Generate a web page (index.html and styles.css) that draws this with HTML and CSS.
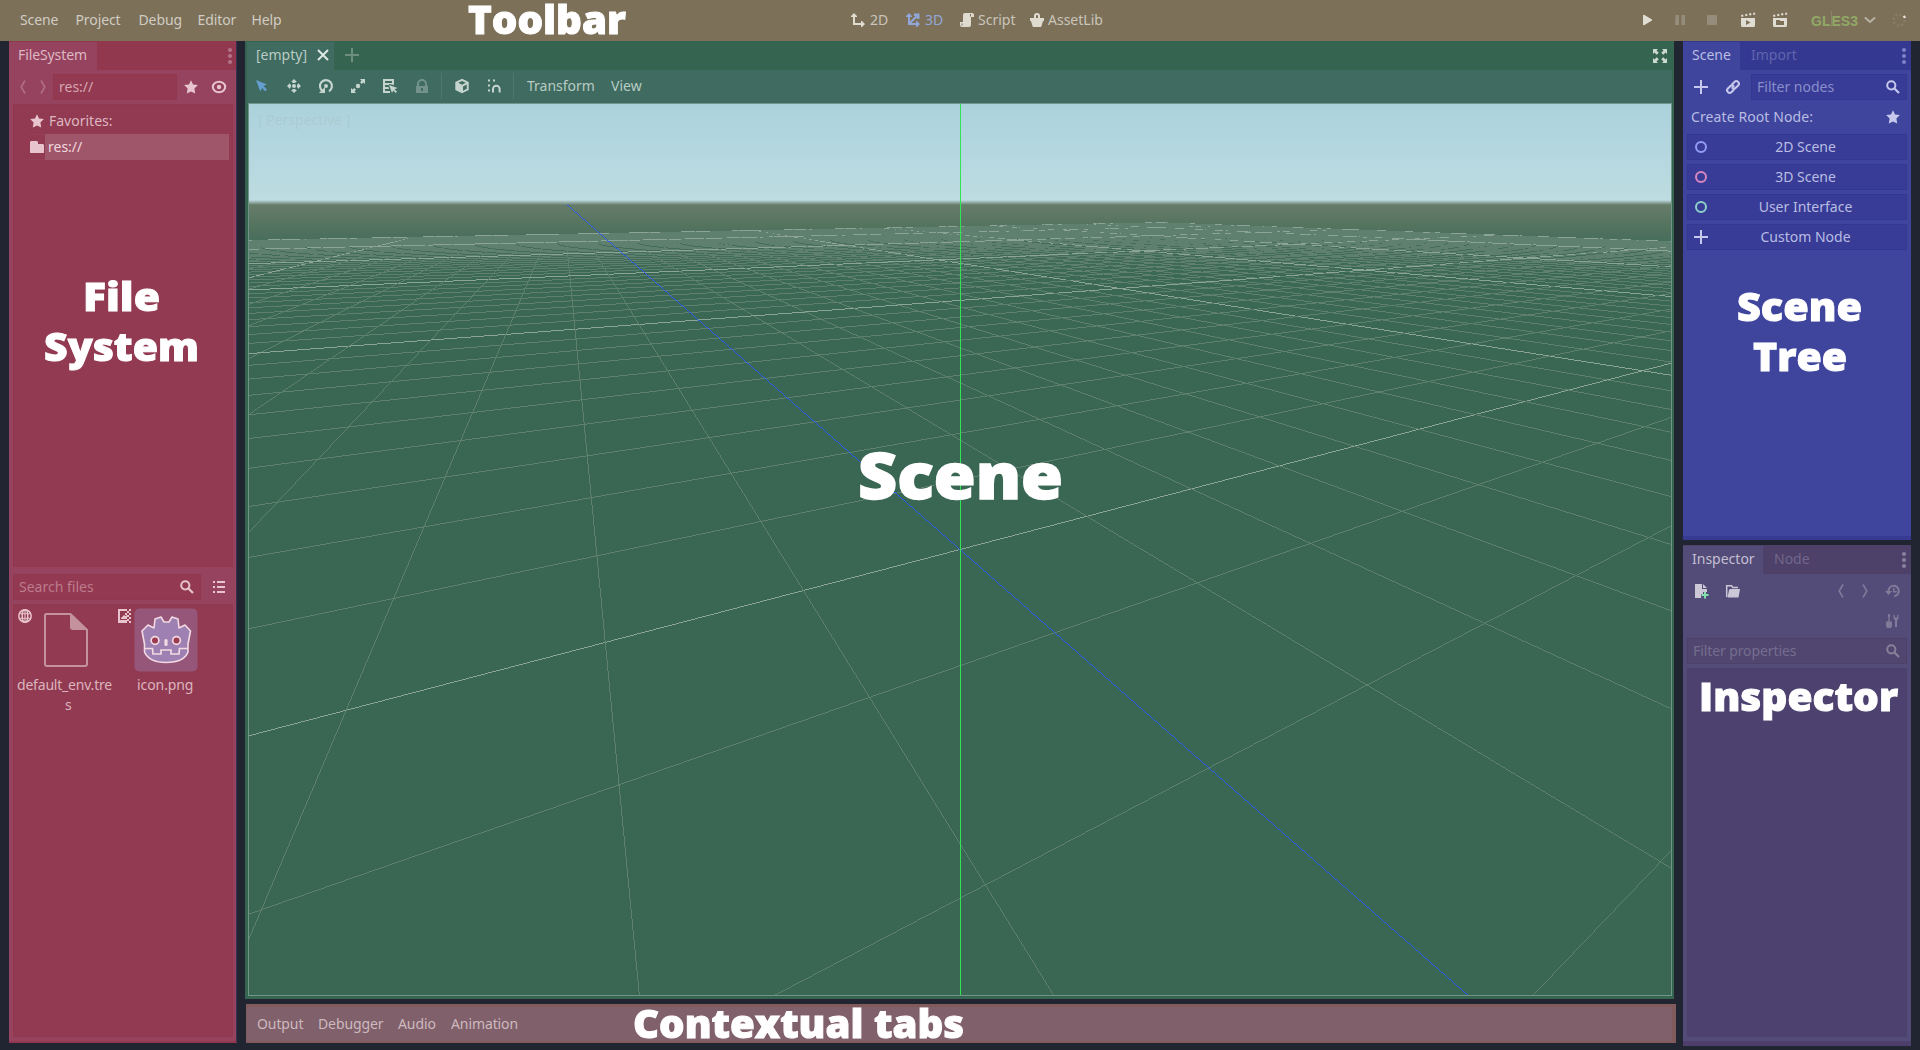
FILE: index.html
```html
<!DOCTYPE html>
<html lang="en">
<head>
<meta charset="utf-8">
<title>Editor</title>
<link rel="stylesheet" href="styles.css">
</head>
<body>
<svg class="defs" width="0" height="0" aria-hidden="true">
  <symbol id="i-2d" viewBox="0 0 16 16"><path d="M4 1 1 4v1h2v8h8v2h1l3-3-3-3h-1v2H5V5h2V4z"/></symbol>
  <symbol id="i-3d" viewBox="0 0 16 16"><path d="M4 1 1 4v1h2v8h8v2h1l3-3-3-3h-1v2H6.500L12 5.600V7h2.500V1.500H9V4h1.400L5 9.400V5h2V4z"/></symbol>
  <symbol id="i-script" viewBox="0 0 16 16"><path d="M6 1a2 2 0 0 0-2 2v7H1v3a2 2 0 0 0 2 2h7a2 2 0 0 0 2-2V5h3V3a2 2 0 0 0-2-2z"/><path d="M3 13.500V11.500M11.500 2v2.500" stroke="#7c7059" fill="none"/></symbol>
  <symbol id="i-basket" viewBox="0 0 16 16"><path d="M8 1a3 3 0 0 0-3 3v2H1v3h1l1.500 5 .5 1h8l.5-1L14 9h1V6h-4V4a3 3 0 0 0-3-3zm0 2a1 1 0 0 1 1 1v2H7V4a1 1 0 0 1 1-1z"/></symbol>
  <symbol id="i-play" viewBox="0 0 16 16"><path d="M4 3v10l1 .2L13 8.500v-1L5 2.800z"/></symbol>
  <symbol id="i-pause" viewBox="0 0 16 16"><path d="M3.500 3h3.500v10H3zM9.500 3H13v10H9.500z"/></symbol>
  <symbol id="i-stop" viewBox="0 0 16 16"><rect x="3" y="3" width="10" height="10" rx="1"/></symbol>
  <symbol id="i-clap-play" viewBox="0 0 16 16"><path fill-rule="evenodd" d="M1 6h14v8l-1 1H2l-1-1zM6 8v5l4.500-2.500z"/><path d="m1 3 2-.5.5 2-2 .5zM5 2.200l2-.4.5 2-2 .4zM9 1.500l2-.4.5 2-2 .4zM13 .900l2-.3.3 2-1.800.3z"/></symbol>
  <symbol id="i-clap-open" viewBox="0 0 16 16"><path fill-rule="evenodd" d="M1 6h14v8l-1 1H2l-1-1zM4 8v5h8V9H8.500L7.500 8z"/><path d="m1 3 2-.5.5 2-2 .5zM5 2.200l2-.4.5 2-2 .4zM9 1.500l2-.4.5 2-2 .4zM13 .900l2-.3.3 2-1.800.3z"/></symbol>
  <symbol id="i-down" viewBox="0 0 16 16"><path d="m3.500 6 4.500 4 4.500-4" fill="none" stroke="currentColor" stroke-width="2" stroke-linecap="round"/></symbol>
  <symbol id="i-spin" viewBox="0 0 16 16"><circle cx="8" cy="8" r="5.500" fill="none" stroke="#8b7e68" stroke-width="2.500" stroke-dasharray="1.900 2.420"/><path d="m11.500 5 2-1.800 1.500 2-.8 1z" fill="#eeeae0"/></symbol>
  <symbol id="i-dots" viewBox="0 0 6 18"><circle cx="3" cy="3" r="2"/><circle cx="3" cy="9" r="2"/><circle cx="3" cy="15" r="2"/></symbol>
  <symbol id="i-back" viewBox="0 0 8 16"><path d="M6 1.500 2.200 8 6 14.500" fill="none" stroke="currentColor" stroke-width="1.600"/></symbol>
  <symbol id="i-fwd" viewBox="0 0 8 16"><path d="M2 1.500 5.800 8 2 14.500" fill="none" stroke="currentColor" stroke-width="1.600"/></symbol>
  <symbol id="i-star" viewBox="0 0 16 16"><path d="m8 1.200 2 4.300 4.900.6-3.500 3.400.8 5L8 12.400l-4.200 2.100.8-5L1.100 6.100 6 5.500z"/></symbol>
  <symbol id="i-eye" viewBox="0 0 16 16"><ellipse cx="8" cy="8" rx="6.200" ry="5.300" fill="none" stroke="currentColor" stroke-width="2"/><circle cx="8" cy="8" r="2.200"/></symbol>
  <symbol id="i-folder" viewBox="0 0 16 16"><path d="M2 2 1 3v10.500l.5.500h13l.5-.5V6l-1-1H9V3L8 2z"/></symbol>
  <symbol id="i-mag" viewBox="0 0 16 16"><circle cx="6.300" cy="6.300" r="4.100" fill="none" stroke="currentColor" stroke-width="2"/><path d="m9.500 9.500 4.500 4.500" stroke="currentColor" stroke-width="2.200"/></symbol>
  <symbol id="i-list" viewBox="0 0 16 16"><path d="M2 2h2v2H2zM6 2h8v2H6zM2 7h2v2H2zM6 7h8v2H6zM2 12h2v2H2zM6 12h8v2H6z"/></symbol>
  <symbol id="i-globe" viewBox="0 0 16 16"><g fill="none" stroke="currentColor" stroke-width="1.500"><circle cx="8" cy="8" r="6.200"/><ellipse cx="8" cy="8" rx="2.800" ry="6.200"/><path d="M2.500 5.800h11M2.500 10.200h11M8 2v12" stroke-width="1.100"/></g></symbol>
  <symbol id="i-image" viewBox="0 0 16 16"><path fill-rule="evenodd" d="M1 1h7v2H3v9h7v3H1zM4 10l3-3 1.500 1.200L10 7v4H4z"/><path d="M8 1h2v2H8zM12 1h2v2h-2zM10 3h2v2h-2zM8 5h2v2H8zM12 5h2v2h-2zM10 7h2v2h-2zM12 9h2v2h-2zM10 11h2v2h-2zM12 13h2v2h-2z"/></symbol>
  <symbol id="i-x" viewBox="0 0 16 16"><path d="m3 3 10 10M13 3 3 13" stroke="currentColor" stroke-width="2"/></symbol>
  <symbol id="i-plus" viewBox="0 0 16 16"><path d="M7 1h2v6h6v2H9v6H7V9H1V7h6z"/></symbol>
  <symbol id="i-expand" viewBox="0 0 16 16"><path d="M1 1h5L4.500 2.500l2.200 2.200-2 2-2.200-2.200L1 6zM15 1v5l-1.500-1.500-2.200 2.200-2-2 2.200-2.200L10 1zM1 15v-5l1.500 1.500 2.200-2.200 2 2-2.200 2.200L6 15zM15 15h-5l1.500-1.500-2.200-2.200 2-2 2.200 2.200L15 10z"/></symbol>
  <symbol id="i-cursor" viewBox="0 0 16 16"><path d="m2 2 11 4.500L9.500 8l3.500 3.500-1.800 1.800L8 10l-1.700 3.500z"/></symbol>
  <symbol id="i-move" viewBox="0 0 16 16"><circle cx="8" cy="8" r="2"/><path d="M8 1 5 4h1.500v1h3V4H11zM8 15l3-3H9.500v-1h-3v1H5zM1 8l3 3V9.500h1v-3H4V5zM15 8l-3-3v1.500h-1v3h1V11z"/></symbol>
  <symbol id="i-rotate" viewBox="0 0 16 16"><path d="M4.600 13A6 6 0 1 1 11 13.200" fill="none" stroke="currentColor" stroke-width="2.200"/><circle cx="8" cy="8" r="2"/><path d="M1 15h6V9z"/></symbol>
  <symbol id="i-scale" viewBox="0 0 16 16"><circle cx="8" cy="8" r="2.200"/><path d="M10 1h5v5l-1.700-1.500-1.500 1.500-1.800-1.800 1.500-1.500zM6 15H1v-5l1.700 1.500 1.500-1.500 1.800 1.800-1.500 1.500z"/></symbol>
  <symbol id="i-select" viewBox="0 0 16 16"><path fill-rule="evenodd" d="M1 1h11v6L7 6v1H3v2h3.500l.5 2H3v2h5v2H1zM3 3v2h7V3z"/><path d="m7 7 8.500 3-3 1.200 2.500 2.500-1.300 1.300-2.500-2.500L10 15z"/></symbol>
  <symbol id="i-lock" viewBox="0 0 16 16"><path fill-rule="evenodd" d="M8 1a5 5 0 0 0-5 5v2H2v7h12V8h-1V6a5 5 0 0 0-5-5zm0 2a3 3 0 0 1 3 3v2H5V6a3 3 0 0 1 3-3zM7 10h2v3H7z"/></symbol>
  <symbol id="i-cube" viewBox="0 0 16 16"><path fill-rule="evenodd" d="M8 .700 1.300 4v8L8 15.300 14.700 12V4zM8 2.900 11.800 4.800 8 6.700 4.200 4.800zM9 8.400l3.800-1.900v4.300L9 12.700z"/></symbol>
  <symbol id="i-snap" viewBox="0 0 16 16"><path d="M2 1.500h2v2H2zM7 1.500h2v2H7zM2 6.500h2v2H2zM2 11.500h2v2H2z"/><path d="M7 14.500V11a3.300 3.300 0 0 1 6.600 0v3.500" fill="none" stroke="currentColor" stroke-width="2"/></symbol>
  <symbol id="i-link" viewBox="0 0 16 16"><g fill="none" stroke="currentColor" stroke-width="2.100" stroke-linecap="round"><path d="M7.200 5.200 9.500 2.900a2.500 2.500 0 0 1 3.600 3.600L10.800 8.800a2.500 2.500 0 0 1-3.400.1"/><path d="M8.800 10.800 6.500 13.100a2.500 2.500 0 0 1-3.600-3.600L5.200 7.200a2.500 2.500 0 0 1 3.400-.1"/></g></symbol>
  <symbol id="i-ring" viewBox="0 0 16 16"><circle cx="8" cy="8" r="5" fill="none" stroke="currentColor" stroke-width="2"/></symbol>
  <symbol id="i-new" viewBox="0 0 16 16"><path d="M2 1h7v5h5v3h-4v2H8v3l.5 1H2zM10 1l4 4h-4z"/><path d="M11 9h2v2h2.500v2H13v2.500h-2V13H8.500v-2H11z" fill="#84e0aa"/></symbol>
  <symbol id="i-open" viewBox="0 0 16 16"><path d="M1.700 14V2.700h4.800L8 4.500h5" fill="none" stroke="currentColor" stroke-width="1.500"/><path d="M5 6h10l-1.500 8.500H2.500L4 7z"/></symbol>
  <symbol id="i-history" viewBox="0 0 16 16"><path d="M3.500 9A5.200 5.200 0 1 1 9 13.200" fill="none" stroke="currentColor" stroke-width="2"/><path d="M0 8h7l-3.500 4z"/><path d="M8.800 5v3.700h3" fill="none" stroke="currentColor" stroke-width="1.500"/></symbol>
  <symbol id="i-tools" viewBox="0 0 16 16"><path d="M3.200 1h1.600l.4 2-.5 1v4.500H7V13l-1 2H2l-1-2V8.500h2.300V4l-.5-1zM8.500 1.500 9.800 2v2.500h2.400V2l1.300-.5V5.500L12 7.500V14h-2V7.500L8.500 5.500z"/></symbol>
</svg>

<header class="menubar">
  <nav class="menus"><span class="m1">Scene</span><span class="m2">Project</span><span class="m3">Debug</span><span class="m4">Editor</span><span>Help</span></nav>
  <div class="modes">
    <span class="mode w56"><svg class="icon"><use href="#i-2d"/></svg>2D</span>
    <span class="mode w54 active"><svg class="icon"><use href="#i-3d"/></svg>3D</span>
    <span class="mode w70"><svg class="icon"><use href="#i-script"/></svg>Script</span>
    <span class="mode"><svg class="icon"><use href="#i-basket"/></svg>AssetLib</span>
  </div>
  <div class="run">
    <svg class="icon"><use href="#i-play"/></svg>
    <svg class="icon dim first"><use href="#i-pause"/></svg>
    <svg class="icon dim"><use href="#i-stop"/></svg>
    <svg class="icon clap"><use href="#i-clap-play"/></svg>
    <svg class="icon"><use href="#i-clap-open"/></svg>
    <span class="driver">GL<i></i>ES3</span>
    <svg class="icon chev"><use href="#i-down"/></svg>
    <svg class="icon spin"><use href="#i-spin"/></svg>
  </div>
</header>

<main class="workspace">
  <aside class="dock files">
    <div class="tabs"><span class="tab">FileSystem</span><svg class="dots"><use href="#i-dots"/></svg></div>
    <div class="pathrow">
      <svg class="nav"><use href="#i-back"/></svg><svg class="nav"><use href="#i-fwd"/></svg>
      <div class="field path">res://</div>
      <svg class="icon"><use href="#i-star"/></svg><svg class="icon"><use href="#i-eye"/></svg>
    </div>
    <div class="box tree">
      <div class="treerow"><svg class="icon"><use href="#i-star"/></svg><span class="treename">Favorites:</span></div>
      <div class="treerow line"><svg class="icon"><use href="#i-folder"/></svg><span class="treename selected">res://</span></div>
    </div>
    <div class="searchrow">
      <div class="field"><span>Search files</span><svg class="icon"><use href="#i-mag"/></svg></div>
      <svg class="icon"><use href="#i-list"/></svg>
    </div>
    <div class="box filelist">
      <div class="file first">
        <svg class="icon badge"><use href="#i-globe"/></svg>
        <svg class="thumb" viewBox="0 0 64 64"><path d="M12.500 6h25L54 22v34a2 2 0 0 1-2 2H14a2 2 0 0 1-2-2V7a2 2 0 0 1 1-1z" fill="none" stroke="#c4919f" stroke-width="2"/><path d="M37 5v14a3 3 0 0 0 3 3h15z" fill="#c4919f"/></svg>
        <span class="fname">default_env.tre<br><em>s</em></span>
      </div>
      <div class="file second">
        <svg class="icon badge"><use href="#i-image"/></svg>
        <svg class="thumb" viewBox="0 0 64 64">
          <rect x=".5" y=".5" width="63" height="63" rx="5" fill="#95567a"/>
          <path d="M10.500 36 8 23l6-6 6 3 1-9 6-2 3 5h5l3-5 6 2 1 9 6-3 5.500 6L54 36v8c-3 8-13 10.500-22 10.500S14 52 10.500 44z" fill="#9e80b2" stroke="#f2d9e2" stroke-width="1.600" stroke-linejoin="round"/>
          <path d="M10.500 40.500h8l.5 5.500h8v-4h10v4h8l.5-5.500h8.500" fill="none" stroke="#f2d9e2" stroke-width="1.700"/>
          <circle cx="21" cy="32.500" r="4.700" fill="#f2d9e2"/><circle cx="21" cy="32.500" r="3" fill="#9c3c52"/>
          <circle cx="42.500" cy="32.500" r="4.700" fill="#f2d9e2"/><circle cx="42.500" cy="32.500" r="3" fill="#9c3c52"/>
          <rect x="30.400" y="31" width="3.200" height="7" rx="1.500" fill="#f2d9e2"/>
        </svg>
        <span class="fname">icon.png</span>
      </div>
    </div>
  </aside>

  <section class="center">
    <div class="stage">
      <div class="tabs scenetabs">
        <span class="tab open">[empty]<svg class="icon"><use href="#i-x"/></svg></span>
        <svg class="icon add"><use href="#i-plus"/></svg>
        <svg class="icon full"><use href="#i-expand"/></svg>
      </div>
      <div class="tools">
        <svg class="icon sel"><use href="#i-cursor"/></svg><svg class="icon"><use href="#i-move"/></svg><svg class="icon"><use href="#i-rotate"/></svg><svg class="icon"><use href="#i-scale"/></svg><svg class="icon"><use href="#i-select"/></svg><svg class="icon dim"><use href="#i-lock"/></svg>
        <i class="sep"></i>
        <svg class="icon"><use href="#i-cube"/></svg><svg class="icon"><use href="#i-snap"/></svg>
        <i class="sep"></i>
        <span class="transform">Transform</span><span>View</span>
      </div>
      <div class="viewport">
        <canvas id="grid" width="1422" height="891"></canvas>
        <span class="persp">[ Perspective ]</span>
      </div>
    </div>
    <footer class="bottom"><span class="b1">Output</span><span class="b2">Debugger</span><span class="b3">Audio</span><span>Animation</span></footer>
  </section>

  <aside class="right">
    <div class="dock scene">
      <div class="tabs"><span class="tab">Scene</span><span class="tab off">Import</span><svg class="dots"><use href="#i-dots"/></svg></div>
      <div class="noderow">
        <svg class="icon"><use href="#i-plus"/></svg><svg class="icon"><use href="#i-link"/></svg>
        <div class="field"><span>Filter nodes</span><svg class="icon"><use href="#i-mag"/></svg></div>
      </div>
      <div class="rootrow"><span>Create Root Node:</span><svg class="icon"><use href="#i-star"/></svg></div>
      <div class="nodes">
        <div class="node"><svg class="icon c2d"><use href="#i-ring"/></svg><span>2D Scene</span></div>
        <div class="node"><svg class="icon c3d"><use href="#i-ring"/></svg><span>3D Scene</span></div>
        <div class="node"><svg class="icon cui"><use href="#i-ring"/></svg><span>User Interface</span></div>
        <div class="node"><svg class="icon"><use href="#i-plus"/></svg><span>Custom Node</span></div>
      </div>
    </div>
    <div class="dock inspector">
      <div class="tabs"><span class="tab">Inspector</span><span class="tab off">Node</span><svg class="dots"><use href="#i-dots"/></svg></div>
      <div class="insrow">
        <svg class="icon"><use href="#i-new"/></svg><svg class="icon"><use href="#i-open"/></svg>
        <svg class="nav push"><use href="#i-back"/></svg><svg class="nav"><use href="#i-fwd"/></svg><svg class="icon faint"><use href="#i-history"/></svg>
      </div>
      <div class="insrow two"><svg class="icon push faint"><use href="#i-tools"/></svg></div>
      <div class="field"><span>Filter properties</span><svg class="icon"><use href="#i-mag"/></svg></div>
      <div class="box props"></div>
    </div>
  </aside>
</main>

<svg class="labels" width="1920" height="1050" viewBox="0 0 1920 1050" font-size="39.500">
  <text x="468" y="34" textLength="158" lengthAdjust="spacingAndGlyphs">Toolbar</text>
  <text x="83" y="311" textLength="77" lengthAdjust="spacingAndGlyphs">File</text>
  <text x="44" y="361" textLength="155" lengthAdjust="spacingAndGlyphs">System</text>
  <text x="858" y="499" textLength="205" lengthAdjust="spacingAndGlyphs" class="big">Scene</text>
  <text x="1737" y="321" textLength="125" lengthAdjust="spacingAndGlyphs">Scene</text>
  <text x="1753" y="371" textLength="94" lengthAdjust="spacingAndGlyphs">Tree</text>
  <text x="1699" y="711" textLength="199" lengthAdjust="spacingAndGlyphs">Inspector</text>
  <text x="633" y="1038" textLength="331" lengthAdjust="spacingAndGlyphs">Contextual tabs</text>
</svg>
<script src="grid.js"></script>
</body>
</html>
```
FILE: styles.css
```css
* { box-sizing: border-box; }
body { margin: 0; width: 1920px; height: 1050px; overflow: hidden; display: flex; flex-direction: column; background: #202531; font: 14px/20px "Noto Sans", sans-serif; color: #d0ccc2; }
.defs { position: absolute; }
svg { display: block; flex: none; fill: currentColor; }
.icon { width: 16px; height: 16px; }
.nav { width: 8px; height: 16px; }
.dots { width: 6px; height: 18px; }

.menubar { height: 41px; flex: none; display: flex; align-items: center; background: #7c7059; padding-bottom: 1px; }
.menus { display: flex; width: 850px; padding-left: 20px; letter-spacing: -.1px; }
.m1 { width: 55.500px; } .m2 { width: 63px; } .m3 { width: 59px; } .m4 { width: 54px; }
.modes { display: flex; width: 789px; color: #c9c5b9; }
.mode { display: flex; align-items: center; gap: 4px; }
.mode .icon { color: #dfdbcf; }
.mode.active, .mode.active .icon { color: #91a6d6; }
.w56 { width: 55px; } .w54 { width: 54px; } .w70 { width: 70px; }
.mode:last-child, .w70 { gap: 3px; }
.run { display: flex; align-items: center; gap: 16px; color: #e0ddd4; }
.run .dim { color: #968c7b; }
.run .first { margin-left: 1px; }
.run .clap { margin-left: 4px; }
.driver { font: bold 14px/20px "Liberation Sans", sans-serif; color: #91a866; margin-left: 7px; width: 47px; display: flex; margin-right: -12px; padding-top: 2px; }
.driver i { width: 1px; height: 16px; background: #8b8465; margin-left: 1px; }
.chev { color: #b8b2a6; }
.spin { margin-left: -3px; }

.workspace { flex: 1; display: flex; min-height: 0; }
.dock { display: flex; flex-direction: column; background: var(--panel); }
.tabs { height: 29px; flex: none; display: flex; align-items: center; background: var(--bar); }
.tab { height: 29px; display: flex; align-items: center; padding: 0 0 2px 9px; background: var(--panel); border-top: 1px solid var(--bar); }
.tab.off { background: none; color: var(--off); padding-left: 11px; }
.tabs .dots { margin-left: auto; margin-right: 4px; color: var(--mark); }
.field { height: 26px; background: var(--field); border: 1px solid var(--bar); display: flex; align-items: center; justify-content: space-between; padding: 0 5px; color: var(--hint); }
.field .icon { color: var(--ink); }
.box { background: var(--box); border: 1px solid var(--bar); }

.files { width: 228px; height: 1002px; margin-left: 9px; --panel: #96435f; --bar: #91374e; --field: #933951; --box: #913a51; --ink: #e8c5ce; --mark: #b5738a; --hint: #bd7c8e; color: #ddb8c2; border-right: 1px solid #3a2f55; border-bottom: 2px solid #953651; }
.files .tab { width: 88px; letter-spacing: -.1px; }
.files .tabs .dots { margin-right: 3px; }
.pathrow { display: flex; align-items: center; padding: 4px 9px 4px 10px; gap: 12px; color: var(--ink); }
.pathrow .nav { color: #b06f84; }
.pathrow .field { width: 124px; margin-left: -6px; color: #d5a6b3; margin-right: -6px; }
.tree { margin: 0 3px 0 4px; height: 463px; padding: 3px 3px 0 15px; }
.treerow { display: flex; align-items: center; height: 26px; color: var(--ink); }
.treerow.line { border-top: 1px solid #973f57; border-bottom: 1px solid #973f57; }
.treename { flex: 1; padding-left: 4px; color: #ddb8c2; }
.treename.selected { background: #9f566b; height: 26px; line-height: 26px; padding-left: 3px; color: #f0d8de; }
.searchrow { display: flex; align-items: center; gap: 10px; padding: 7px 9px 4px 4px; color: var(--ink); }
.searchrow .field { width: 188px; }
.filelist { margin: 0 3px 4px 4px; flex: 1; display: flex; padding: 3px 0 0 2px; }
.file { position: relative; }
.file.first { width: 100px; padding-left: 17px; }
.file.second { width: 118px; padding-left: 19px; }
.badge { position: absolute; left: 1px; top: 0; color: var(--ink); }
.second .badge { left: 2px; }
.thumb { width: 64px; height: 64px; }
.fname { display: block; margin-top: 3px; margin-left: -16px; color: #dcb5bf; white-space: nowrap; letter-spacing: -.2px; }
.second .fname { margin-left: 3px; letter-spacing: -.1px; }
.fname em { font-style: normal; padding-left: 48px; }

.center { width: 1431px; margin-left: 8px; display: flex; flex-direction: column; }
.stage { --panel: #3f6b60; --bar: #356550; width: 1429px; height: 958px; flex: none; background: #356550; padding: 0 2px 3px; color: #b9cbc4; display: flex; flex-direction: column; }
.tab.open { width: 87px; justify-content: space-between; padding-right: 3px; }
.tab.open .icon { color: #dfe8e2; }
.add { color: #6e8f7f; margin-left: 10px; margin-bottom: 1px; }
.full { margin-left: auto; margin-right: 4px; color: #ccd9d1; }
.tools { height: 33px; flex: none; background: var(--panel); display: flex; align-items: center; padding-left: 7px; gap: 16px; padding-bottom: 1px; }
.tools .icon { color: #c5d5ce; }
.tools .icon.sel { color: #659fd2; }
.tools .icon.dim { color: #73928a; }
.sep { width: 1px; height: 26px; background: #4f7970; margin: 0 -4px 0 -5px; }
.transform { width: 68px; margin-left: 1px; }
.viewport { flex: none; position: relative; width: 1424px; height: 893px; margin-left: 1px; border: 1px solid #719588; }
canvas { display: block; width: 1422px; height: 891px; }
.persp { position: absolute; left: 9px; top: 6px; color: #abcbd1; }
.bottom { margin: 5px 0 0 1px; height: 39px; background: #80606a; border: 1px solid #815a5c; border-width: 3px 4px 2px 1px; display: flex; align-items: center; padding: 0 0 1px 10px; color: #cdb9bf; letter-spacing: -.1px; }
.b1 { width: 61px; } .b2 { width: 80px; } .b3 { width: 53px; }

.right { width: 228px; margin-left: 7px; display: flex; flex-direction: column; gap: 5px; }
.scene { height: 499px; flex: none; --panel: #3f459d; --bar: #343890; --field: #383c96; --box: #373b95; --ink: #c6c8ec; --mark: #7f83c6; --off: #6065af; --hint: #8a8dcb; color: #b9bce3; border-bottom: 4px solid #363a92; }
.scene .tab:first-child { width: 57px; }
.noderow { display: flex; align-items: center; padding: 4px 4px 4px 10px; gap: 16px; color: var(--ink); }
.noderow .field { width: 156px; margin-left: -6px; }
.rootrow { display: flex; align-items: center; justify-content: space-between; height: 26px; padding: 0 10px 0 8px; letter-spacing: .1px; }
.rootrow .icon { color: var(--ink); }
.nodes { display: flex; flex-direction: column; gap: 4px; padding: 4px; }
.node { height: 26px; background: var(--field); border: 1px solid var(--bar); display: flex; align-items: center; padding: 0 5px; }
.node .icon { color: var(--ink); }
.node span { flex: 1; text-align: center; padding-left: 1px; }
.node .c2d { color: #939df4; } .node .c3d { color: #da86c1; } .node .cui { color: #8cd2cb; }

.inspector { height: 501px; flex: none; --panel: #534c79; --bar: #4d4069; --field: #50466f; --box: #4d4170; --ink: #878099; --mark: #8a839f; --off: #71688b; --hint: #756d90; color: #c4bfd0; border-bottom: 5px solid #4d3e6b; }
.inspector .tab:first-child { width: 80px; }
.insrow { display: flex; align-items: center; height: 34px; flex: none; padding: 0 10px; gap: 16px; color: #ccc8d6; }
.insrow .push { margin-left: auto; }
.insrow .nav, .faint { color: #817a98; }
.insrow.two { height: 26px; }
.inspector .field { margin: 4px 4px; flex: none; letter-spacing: -.1px; }
.props { margin: 0 4px 4px; flex: 1; }

.labels { position: absolute; left: 0; top: 0; font-family: "Open Sans", sans-serif; font-weight: 800; fill: #fff; stroke: #fff; stroke-width: 1px; }
.labels .big { font-size: 64px; stroke-width: 1.500px; }
```
FILE: grid.js
```js
// Ground grid, axes and sky of the perspective view.
(function () {
  var canvas = document.getElementById('grid');
  var ctx = canvas.getContext('2d');
  var W = canvas.width, H = canvas.height;
  var CX = 711, CY = 445.5;
  var PITCH = 0.5, YAW = 0.5, DIST = 4;
  var FOCAL = 447 / Math.tan(35 * Math.PI / 180);
  var NEAR = 0.05;

  function fillBand(y0, y1, stops) {
    var g = ctx.createLinearGradient(0, y0, 0, y1);
    stops.forEach(function (s) { g.addColorStop(s[0], s[1]); });
    ctx.fillStyle = g;
    ctx.fillRect(0, y0, W, y1 - y0);
  }
  fillBand(0, 96, [[0, '#abd2dc'], [0.5, '#b4d7df'], [1, '#bedce1']]);
  fillBand(96, 101, [[0, '#bedce1'], [1, '#667c69']]);
  fillBand(101, H, [[0, '#667c69'], [0.025, '#55745f'], [0.05, '#446c5b'], [0.09, '#3b6956'], [0.2, '#396754'], [1, '#396754']]);

  var img = ctx.getImageData(0, 0, W, H);
  var depth = new Float32Array(W * H);

  // world -> camera space
  function toCam(x, y, z) {
    var fwd = -z * Math.cos(YAW) + x * Math.sin(YAW);
    var side = z * Math.sin(YAW) + x * Math.cos(YAW);
    return [side, y * Math.cos(PITCH) + fwd * Math.sin(PITCH), fwd * Math.cos(PITCH) - y * Math.sin(PITCH) + DIST];
  }
  function line(a, b, color) {
    a = toCam(a[0], a[1], a[2]); b = toCam(b[0], b[1], b[2]);
    if (a[2] < NEAR && b[2] < NEAR) return;
    if (a[2] < NEAR || b[2] < NEAR) {
      var t = (NEAR - a[2]) / (b[2] - a[2]);
      var c = [a[0] + (b[0] - a[0]) * t, a[1] + (b[1] - a[1]) * t, NEAR];
      if (a[2] < NEAR) a = c; else b = c;
    }
    var x0 = CX + FOCAL * a[0] / a[2], y0 = CY - FOCAL * a[1] / a[2], w0 = 1 / a[2];
    var x1 = CX + FOCAL * b[0] / b[2], y1 = CY - FOCAL * b[1] / b[2], w1 = 1 / b[2];
    var dx = x1 - x0, dy = y1 - y0, steep = Math.abs(dy) > Math.abs(dx);
    var p0 = steep ? y0 : x0, p1 = steep ? y1 : x1;
    var lo = Math.max(0, Math.ceil(Math.min(p0, p1) - 0.5));
    var hi = Math.min((steep ? H : W) - 1, Math.floor(Math.max(p0, p1) - 0.5));
    for (var i = lo; i <= hi; i++) {
      var k = (i + 0.5 - p0) / (p1 - p0);
      var px = steep ? Math.floor(x0 + dx * k) : i;
      var py = steep ? i : Math.floor(y0 + dy * k);
      if (px < 0 || py < 0 || px >= W || py >= H) continue;
      var w = w0 + (w1 - w0) * k, o = py * W + px;
      if (w < depth[o]) continue;
      depth[o] = w;
      img.data[o * 4] = color[0]; img.data[o * 4 + 1] = color[1]; img.data[o * 4 + 2] = color[2];
    }
  }

  var MINOR = [95, 127, 111], MAJOR = [140, 164, 149], BLUE = [45, 92, 235];
  for (var i = -50; i <= 50; i++) {
    var c = i % 10 === 0 ? MAJOR : MINOR;
    if (i !== 0) line([i, 0, -50], [i, 0, 50], c);
    line([-50, 0, i], [50, 0, i], c);
  }
  depth.fill(0);
  line([0, 0, -500], [0, 0, 500], BLUE);
  ctx.putImageData(img, 0, 0);
  ctx.fillStyle = '#2fe554';
  ctx.fillRect(711, 0, 1, H);
})();
```
